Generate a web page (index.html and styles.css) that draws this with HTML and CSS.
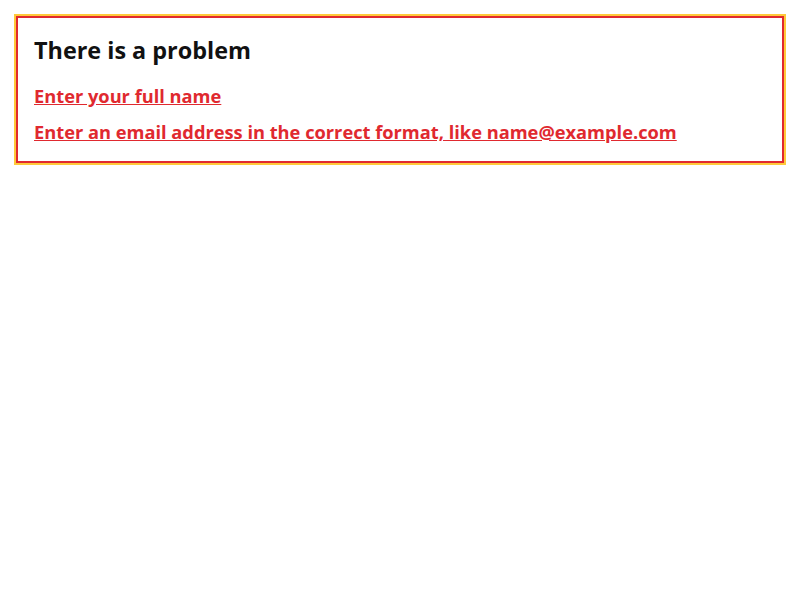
FILE: index.html
```html
<!DOCTYPE html>
<html lang="en">
<head>
<meta charset="utf-8">
<title>Error summary</title>
<link rel="stylesheet" href="styles.css">
</head>
<body>
<div class="error-summary" tabindex="-1">
  <h2 class="error-summary__title">There is a problem</h2>
  <ul class="error-summary__list">
    <li><a href="#full-name">Enter your full name</a></li>
    <li><a href="#email">Enter an email address in the correct format, like name@example.com</a></li>
  </ul>
</div>
</body>
</html>
```

FILE: styles.css
```css
html, body {
  margin: 0;
  padding: 0;
  background: #ffffff;
}

body {
  padding: 16px;
  font-family: "Open Sans", "Noto Sans", sans-serif;
}

.error-summary {
  border: 2px solid #e0292f;
  outline: 2px solid #ffc93a;
  padding: 17px 16px 17px;
  color: #0b0c0c;
}

.error-summary__title {
  margin: 0 0 18px;
  font-size: 23.4px;
  line-height: 30px;
  font-weight: 700;
  color: #111111;
}

.error-summary__list {
  list-style: none;
  margin: 0;
  padding: 0;
  display: flex;
  flex-direction: column;
  gap: 11px;
}

.error-summary__list a {
  font-size: 18.25px;
  line-height: 25px;
  font-weight: 700;
  color: #e0292f;
  text-decoration: underline;
}
```
